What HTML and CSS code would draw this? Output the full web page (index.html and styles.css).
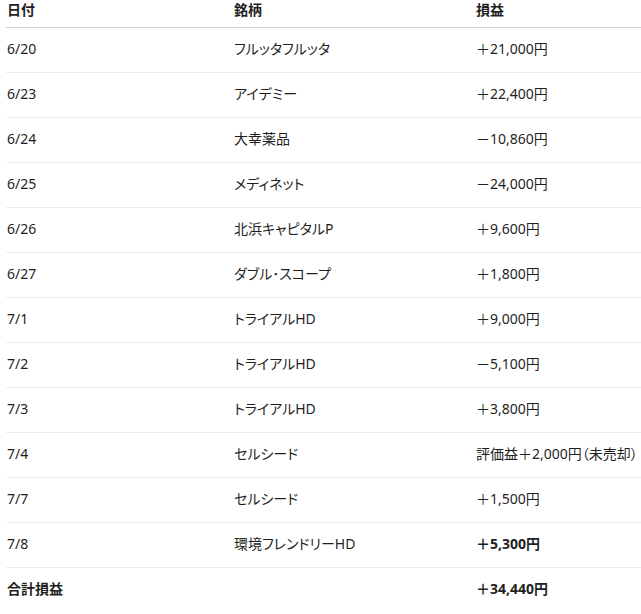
FILE: index.html
```html
<!DOCTYPE html>
<html lang="ja">
<head>
<meta charset="utf-8">
<link rel="stylesheet" href="styles.css">
</head>
<body>
<table class="pl">
  <thead>
    <tr><th class="c-date">日付</th><th class="c-name">銘柄</th><th class="c-val">損益</th></tr>
  </thead>
  <tbody>
    <tr><td>6/20</td><td>フルッタフルッタ</td><td>＋21,000円</td></tr>
    <tr><td>6/23</td><td>アイデミー</td><td>＋22,400円</td></tr>
    <tr><td>6/24</td><td>大幸薬品</td><td>－10,860円</td></tr>
    <tr><td>6/25</td><td>メディネット</td><td>－24,000円</td></tr>
    <tr><td>6/26</td><td>北浜キャピタルP</td><td>＋9,600円</td></tr>
    <tr><td>6/27</td><td>ダブル･スコープ</td><td>＋1,800円</td></tr>
    <tr><td>7/1</td><td>トライアルHD</td><td>＋9,000円</td></tr>
    <tr><td>7/2</td><td>トライアルHD</td><td>－5,100円</td></tr>
    <tr><td>7/3</td><td>トライアルHD</td><td>＋3,800円</td></tr>
    <tr><td>7/4</td><td>セルシード</td><td>評価益＋2,000円（未売却）</td></tr>
    <tr><td>7/7</td><td>セルシード</td><td>＋1,500円</td></tr>
    <tr><td>7/8</td><td>環境フレンドリーHD</td><td class="strong">＋5,300円</td></tr>
    <tr class="total"><td>合計損益</td><td></td><td>＋34,440円</td></tr>
  </tbody>
</table>
</body>
</html>
```
FILE: styles.css
```css
html, body {
  margin: 0;
  padding: 0;
  background: #ffffff;
}
body {
  font-family: "Noto Sans", "Noto Sans CJK JP", sans-serif;
  font-size: 14px;
  color: #1f1f1f;
  overflow: hidden;
  font-feature-settings: "palt";
}
.pl {
  border-collapse: collapse;
  margin-left: 6px;
  width: 635px;
  table-layout: fixed;
}
.pl th, .pl td {
  text-align: left;
  padding: 11px 0 13px 1px;
  height: 20px;
  line-height: 20px;
  white-space: nowrap;
  vertical-align: middle;
  overflow: visible;
}
.pl th {
  font-weight: 700;
  padding-top: 0;
  padding-bottom: 7px;
  border-bottom: 1px solid #cfcfcf;
}
.pl td {
  border-bottom: 1px solid #ececec;
}
.c-date { width: 226px; }
.c-name { width: 241px; }
.strong, .total td { font-weight: 700; }
.total td { border-bottom: none; }
```
